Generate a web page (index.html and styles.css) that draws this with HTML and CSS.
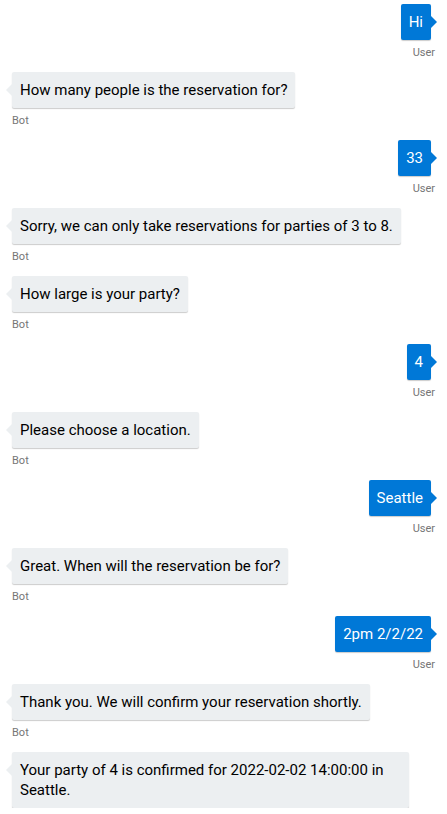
FILE: index.html
```html
<!DOCTYPE html>
<html lang="en">
<head>
<meta charset="utf-8">
<title>Chat</title>
<link rel="stylesheet" href="styles.css">
</head>
<body>
<div class="chat">
  <div class="row me">
    <div class="msg"><div class="bubble">Hi</div><svg class="callout" viewBox="0 0 6 12"><path d="M0 0 L6 6 L0 12 Z"/></svg></div>
    <div class="from">User</div>
  </div>
  <div class="row bot">
    <div class="msg"><div class="bubble">How many people is the reservation for?</div><svg class="callout" viewBox="0 0 6 12"><path d="M6 0 L0 6 L6 12 Z"/></svg></div>
    <div class="from">Bot</div>
  </div>
  <div class="row me">
    <div class="msg"><div class="bubble">33</div><svg class="callout" viewBox="0 0 6 12"><path d="M0 0 L6 6 L0 12 Z"/></svg></div>
    <div class="from">User</div>
  </div>
  <div class="row bot">
    <div class="msg"><div class="bubble">Sorry, we can only take reservations for parties of 3 to 8.</div><svg class="callout" viewBox="0 0 6 12"><path d="M6 0 L0 6 L6 12 Z"/></svg></div>
    <div class="from">Bot</div>
  </div>
  <div class="row bot">
    <div class="msg"><div class="bubble">How large is your party?</div><svg class="callout" viewBox="0 0 6 12"><path d="M6 0 L0 6 L6 12 Z"/></svg></div>
    <div class="from">Bot</div>
  </div>
  <div class="row me">
    <div class="msg"><div class="bubble">4</div><svg class="callout" viewBox="0 0 6 12"><path d="M0 0 L6 6 L0 12 Z"/></svg></div>
    <div class="from">User</div>
  </div>
  <div class="row bot">
    <div class="msg"><div class="bubble">Please choose a location.</div><svg class="callout" viewBox="0 0 6 12"><path d="M6 0 L0 6 L6 12 Z"/></svg></div>
    <div class="from">Bot</div>
  </div>
  <div class="row me">
    <div class="msg"><div class="bubble">Seattle</div><svg class="callout" viewBox="0 0 6 12"><path d="M0 0 L6 6 L0 12 Z"/></svg></div>
    <div class="from">User</div>
  </div>
  <div class="row bot">
    <div class="msg"><div class="bubble">Great. When will the reservation be for?</div><svg class="callout" viewBox="0 0 6 12"><path d="M6 0 L0 6 L6 12 Z"/></svg></div>
    <div class="from">Bot</div>
  </div>
  <div class="row me">
    <div class="msg"><div class="bubble">2pm 2/2/22</div><svg class="callout" viewBox="0 0 6 12"><path d="M0 0 L6 6 L0 12 Z"/></svg></div>
    <div class="from">User</div>
  </div>
  <div class="row bot">
    <div class="msg"><div class="bubble">Thank you. We will confirm your reservation shortly.</div><svg class="callout" viewBox="0 0 6 12"><path d="M6 0 L0 6 L6 12 Z"/></svg></div>
    <div class="from">Bot</div>
  </div>
  <div class="row bot">
    <div class="msg"><div class="bubble">Your party of 4 is confirmed for 2022-02-02 14:00:00 in Seattle.</div><svg class="callout" viewBox="0 0 6 12"><path d="M6 0 L0 6 L6 12 Z"/></svg></div>
  </div>
</div>
</body>
</html>
```
FILE: styles.css
```css
html, body {
  margin: 0;
  padding: 0;
  background: #ffffff;
}

.chat {
  display: flex;
  flex-direction: column;
  gap: 12px;
  padding: 4px 16px 0 12px;
  font-family: Roboto, "Segoe UI", sans-serif;
  font-size: 15px;
}

.row {
  display: flex;
  flex-direction: column;
}

.row.me {
  align-items: flex-end;
}

.row.bot {
  align-items: flex-start;
}

.msg {
  position: relative;
  max-width: 397px;
}

.bubble {
  box-sizing: border-box;
  padding: 8px;
  line-height: 20px;
  border-radius: 2px;
  box-shadow: 0 1px 1px 0 rgba(0, 0, 0, 0.2);
}

.me .bubble {
  background: #0078d7;
  color: #ffffff;
}

.bot .bubble {
  background: #eceff1;
  color: #000000;
}

.callout {
  position: absolute;
  top: 12px;
  width: 6px;
  height: 12px;
}

.me .callout {
  right: -6px;
  fill: #0078d7;
}

.bot .callout {
  left: -6px;
  fill: #eceff1;
}

.from {
  margin-top: 5px;
  font-size: 11px;
  line-height: 15px;
  color: #767676;
}

.me .from {
  margin-right: -4px;
}
```
